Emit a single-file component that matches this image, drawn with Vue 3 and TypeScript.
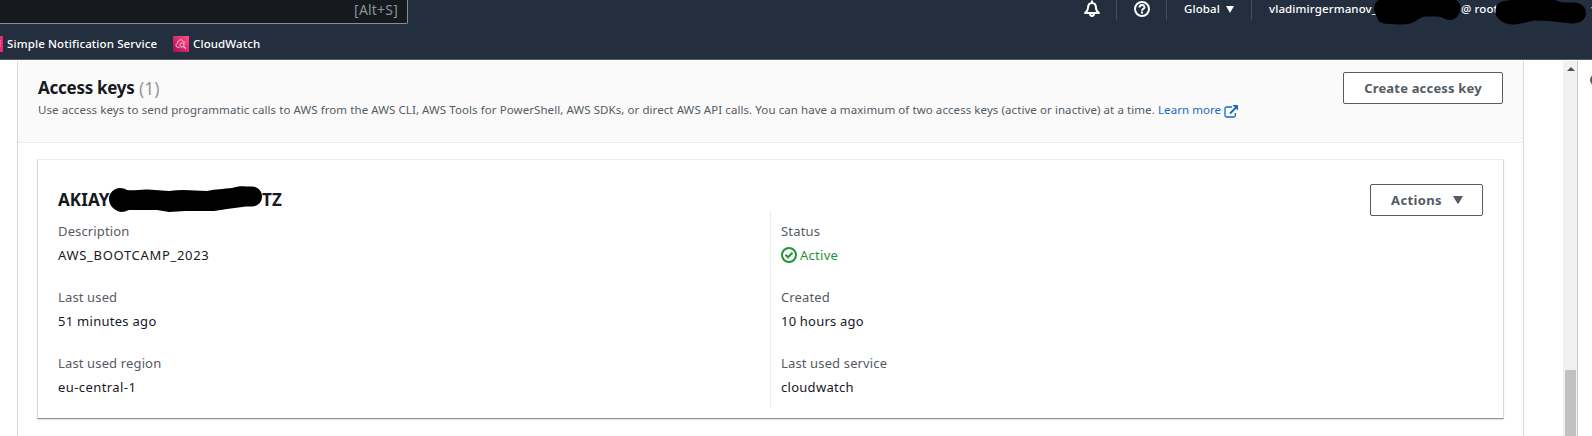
<script setup lang="ts">
interface Field { label: string; value: string; lw: string; vw: string; active?: boolean }
const left: Field[] = [
  { label: 'Description', value: 'AWS_BOOTCAMP_2023', lw: 'track-1', vw: 'track-6' },
  { label: 'Last used', value: '51 minutes ago', lw: 'track-1', vw: 'track-3' },
  { label: 'Last used region', value: 'eu-central-1', lw: 'track-1', vw: 'track-4' },
]
const right: Field[] = [
  { label: 'Status', value: 'Active', lw: 'track-2', vw: 'track-3', active: true },
  { label: 'Created', value: '10 hours ago', lw: 'track-1', vw: 'track-2' },
  { label: 'Last used service', value: 'cloudwatch', lw: 'track-1', vw: 'track-3' },
]
</script>

<template>
  <div class="page">
    <header class="top">
      <div class="nav">
        <div class="search"><span>[Alt+S]</span></div>
        <div class="tools">
          <div class="cell bell">
            <svg width="16" height="18" viewBox="0 0 16 18" fill="none" stroke="#fff" stroke-width="2" stroke-linejoin="round">
              <path d="M8 .5v2.500M4 8c0-3.500 1.500-5 4-5s4 1.500 4 5c0 2 1 3.500 3 5H1C3 11.500 4 10 4 8z" /><path d="M6 13.500c0 3.300 4 3.300 4 0" />
            </svg>
          </div>
          <div class="cell help">
            <svg width="16" height="17" viewBox="0 0 16 17" fill="none" stroke="#fff" stroke-width="2">
              <circle cx="8" cy="9" r="7" /><path d="M5.500 7.500c0-3.300 5-3.200 5-.3C10.500 9 8 8.800 8 10.700M8 11.600v1.900" />
            </svg>
          </div>
          <div class="cell global"><span class="t">Global</span><svg width="8" height="7" viewBox="0 0 8 7"><path d="M0 0h8L4 7z" fill="#fff" /></svg></div>
          <div class="cell user">
            <span class="t name">vladimirgermanov_</span><span class="t root">@ root</span>
            <svg class="ink" width="213" height="28" viewBox="0 0 213 28">
              <path d="M0 8.500C0 4 3 0 7-1H80C85 1 87 5 86.500 9C86 14 82 20 76 20C71 20 68 16.500 63 16.500H50C45 18 43 21 39 22.500C34 24.500 30 24.400 25.500 24.400C19 24.400 13 24 8.500 23C5 22 4 20 3.400 18C2 15 0 12 0 8.500z" />
              <path d="M121.500 12C121.500 6 124 2 130 1L145-1H178L188 2.500H201C208 3 212 8 212 13C212 19 207 23.500 198 23.500L175 21L160 20.500L154 22L141 24.500C134 24.500 129 23 126 20C123 18 121.500 15 121.500 12z" />
            </svg>
            <svg class="more" width="1" height="3" viewBox="0 0 1 3"><path d="M0 0h1v2z" fill="#c5cbd1" /></svg>
          </div>
        </div>
      </div>
      <div class="favs">
        <svg class="sns" width="3" height="16" viewBox="0 0 3 16"><path d="M0 0h3v16H0z" fill="#e12d70" /><path d="M0 5h1M0 7.500h1M0 10h1" stroke="#ff9dbe" /></svg>
        <span class="t sn">Simple Notification Service</span>
        <svg class="cwi" width="16" height="16" viewBox="0 0 16 16" fill="none">
          <defs><linearGradient id="pink" x1="0" y1="1" x2="1" y2="0"><stop stop-color="#b0084d" /><stop offset="1" stop-color="#ff4f8b" /></linearGradient></defs>
          <path d="M0 0h16v16H0z" fill="url(#pink)" />
          <path d="M6.500 11.300H4.700C2.500 11 2.500 8 4.500 7.500 4.500 3.500 9.500 2.500 10.400 6c1.300-.3 1.700.5 1.700 1.500" stroke="#ffd7e5" stroke-width=".9" />
          <circle cx="9" cy="9" r="2.100" stroke="#ffd7e5" stroke-width=".9" /><path d="M10.600 10.600l2.300 2" stroke="#ffd7e5" stroke-width="1.200" />
        </svg>
        <span class="t cw">CloudWatch</span>
      </div>
    </header>
    <div class="body">
      <main class="panel">
        <section class="head">
          <div class="copy">
            <h2><b class="ak">Access keys</b><span class="count">(1)</span></h2>
            <p><span class="desc">Use access keys to send programmatic calls to AWS from the AWS CLI, AWS Tools for PowerShell, AWS SDKs, or direct AWS API calls. You can have a maximum of two access keys (active or inactive) at a time.</span><a>Learn more</a>
              <svg width="14" height="13" viewBox="0 0 14 13" fill="none" stroke="#1a66c2"><path d="M8 2H2.500Q1 2 1 3.500v7Q1 12 2.500 12h7.500Q11.300 12 11.300 10.500V8" stroke-width="1.300" /><path d="M6 8.500l6-6" stroke-width="1.800" /><path d="M8.500 0H14v5.500z" fill="#1a66c2" stroke="none" /></svg>
            </p>
          </div>
          <button class="create"><span>Create access key</span></button>
        </section>
        <section class="card">
          <div class="keyrow">
            <h3><span class="k1">AKIAY</span><span class="k2">TZ</span>
              <svg class="keyink" width="156" height="30" viewBox="0 0 156 30"><path d="M0 13C0 7 5 2 11 2Q15 2 18 4C25 5 32 3 39 3.500L60 5Q68 4 74 4L98 5C107 3 115 3 123 2C129 0 133 0 137 .5H143C149 .5 153 5 153 10.500C153 16 149 20.500 143 20.500H137L118 23L105 25H76L60 26L48 24H20C17 25 15 26 12 26C6 25 0 20 0 13z" /></svg>
            </h3>
            <button class="actions"><span>Actions</span><svg width="10" height="8" viewBox="0 0 10 8"><path d="M0 0h10L5.700 7.300Q5 8.300 4.300 7.300z" fill="#545b64" /></svg></button>
          </div>
          <div class="cols">
            <dl v-for="(col, i) in [left, right]" :key="i" :class="{ second: i === 1 }">
              <div v-for="f in col" :key="f.label" class="field">
                <dt :class="f.lw">{{ f.label }}</dt>
                <dd :class="{ ok: f.active }">
                  <svg v-if="f.active" width="16" height="16" viewBox="0 0 16 16" fill="none" stroke="#1d9534" stroke-width="2"><circle cx="8" cy="8" r="7" /><path d="M4.500 7.700l2.500 2.600 4.500-4.600" /></svg><span :class="f.vw">{{ f.value }}</span>
                </dd>
              </div>
            </dl>
          </div>
        </section>
      </main>
      <div class="scroll"><svg width="8" height="4" viewBox="0 0 8 4"><path d="M4 0l4 4H0z" fill="#505050" /></svg><div class="thumb"></div></div>
      <aside><i></i></aside>
    </div>
  </div>
</template>

<style>
body { margin: 0; overflow: hidden; background: #fff; }
</style>
<style scoped>
* { box-sizing: border-box; }
.page { width: 1592px; height: 436px; overflow: hidden; font-family: "Noto Sans", sans-serif; font-weight: 500; color: #16191f; display: flex; flex-direction: column; }
span, a, b, dt { white-space: nowrap; }
svg { flex: none; display: block; }
.track-1 { letter-spacing: .14px; }
.track-2 { letter-spacing: .2px; }
.track-3 { letter-spacing: .28px; }
.track-4 { letter-spacing: .42px; }
.track-6 { letter-spacing: .68px; }
.top { height: 60px; flex: none; background: #232f3e; border-bottom: 1px solid #545b64; color: #fff; }
.nav { height: 30px; display: flex; justify-content: space-between; align-items: flex-start; }
.search { width: 408px; height: 24px; background: #161920; border: solid #839196; border-width: 0 1px 1px 0; border-radius: 0 0 2px 0; color: #879596; font-size: 14px; line-height: 20px; letter-spacing: .2px; display: flex; justify-content: flex-end; padding-right: 9px; font-weight: 400; }
.tools { display: flex; height: 20px; font-size: 11.5px; letter-spacing: .12px; line-height: 18px; }
.cell { display: flex; border-left: 1px solid #414d5c; height: 20px; flex: none; }
.bell { width: 32px; border: 0; }
.help { width: 50px; padding-left: 17px; }
.global { width: 85px; padding-left: 17px; gap: 6px; }
.global svg { margin-top: 6px; }
.user { width: 341px; padding-left: 17px; position: relative; }
.name { width: 192px; }
.ink { position: absolute; left: 122px; top: 0; fill: #000; }
.more { position: absolute; right: 0; top: 7px; }
.favs { height: 29px; display: flex; align-items: center; font-size: 11.5px; letter-spacing: .12px; line-height: 18px; padding-bottom: 1px; }
.sn { margin-left: 4px; width: 166px; }
.cwi { margin-right: 4px; }
.body { display: flex; flex: 1; padding-top: 1px; }
.panel { width: 1507px; margin-left: 17px; border: solid #d5dbdb; border-width: 0 1px; height: 375px; }
.head { height: 82px; background: #fafafa; border-bottom: 1px solid #eaeded; padding: 11px 20px 0 20px; display: flex; justify-content: space-between; }
h2 { margin: 4px 0 0; font-size: 17px; line-height: 24px; font-weight: 400; display: flex; }
.ak { width: 101px; letter-spacing: -.27px; }
.count { color: #96999d; font-size: 17.5px; }
p { margin: 0; font-size: 11.5px; line-height: 20px; color: #545b64; display: flex; align-items: center; font-weight: 400; }
.desc { width: 1116px; letter-spacing: .075px; }
a { color: #1a66c2; margin-left: 4px; letter-spacing: .06px; }
p svg { margin: 3px 0 0 3px; }
button { background: #fff; border: 1px solid #545b64; border-radius: 2px; height: 32px; padding: 0; color: #545b64; font: 700 13px/20px "Noto Sans", sans-serif; display: flex; align-items: center; justify-content: center; }
.create { width: 160px; letter-spacing: .18px; }
.actions { width: 113px; gap: 11px; padding-left: 1px; letter-spacing: .35px; }
.card { height: 260px; margin: 16px 19px 0; border: 1px solid #d5dbdb; border-top-color: #eaeded; border-bottom-color: #879596; box-shadow: 0 1px 1px #e3e7e7; padding: 24px 20px 0 20px; }
.keyrow { display: flex; justify-content: space-between; height: 26px; }
h3 { margin: 5px 0 0; font-size: 17px; line-height: 22px; letter-spacing: .1px; position: relative; display: flex; height: 22px; }
.k1 { width: 204px; }
.keyink { position: absolute; left: 51px; top: -3px; }
.cols { display: flex; height: 198px; }
dl { margin: 0; padding-top: 10px; width: 712px; flex: none; }
.second { border-left: 1px solid #eaeded; padding-left: 10px; }
.field { height: 66px; }
dt { font-size: 13px; line-height: 22px; color: #545b64; font-weight: 400; }
dd { margin: 2px 0 0; font-size: 13px; line-height: 22px; display: flex; align-items: center; font-weight: 400; }
.ok { color: #1d9534; gap: 3px; }
.scroll { margin-left: 39px; width: 14px; background: #f0f0f0; padding-top: 6px; display: flex; flex-direction: column; align-items: center; }
.scroll svg { margin-right: -1px; }
.thumb { width: 11px; height: 66px; margin: 299px 0 0 1px; background: #c1c1c1; flex: none; }
aside { flex: 1; border-left: 1px solid #c9cccc; display: flex; justify-content: flex-end; overflow: hidden; }
i { width: 12px; height: 12px; border: 2px solid #545b64; border-radius: 50%; margin: 13px -10px 0 0; flex: none; }
</style>
